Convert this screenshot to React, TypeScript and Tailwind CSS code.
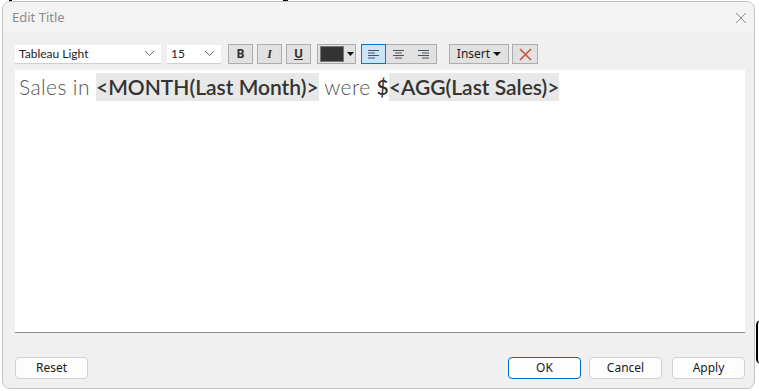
import React from 'react';

const ui = { fontFamily: '"Noto Sans", "Open Sans", sans-serif' };
const tab = { fontFamily: 'Lato, "Noto Sans", sans-serif' };

function Chevron() {
  return (
    <svg width="11" height="7" viewBox="0 0 11 7" className="shrink-0">
      <path d="M1 1 L5.5 5.5 L10 1" fill="none" stroke="#6b6b6b" strokeWidth="1" />
    </svg>
  );
}

function Select({ label, width }: { label: string; width: string }) {
  return (
    <div
      className={`flex items-center justify-between h-[19px] bg-white border-b border-[#d0d0d0] pl-[4px] pr-[6px] ${width}`}
    >
      <span className="text-[12px] text-[#222]" style={tab}>
        {label}
      </span>
      <Chevron />
    </div>
  );
}

function FmtButton({ children }: { children: React.ReactNode }) {
  return (
    <div className="flex items-center justify-center w-[25px] h-[20px] bg-[#e1e1e1] border border-[#adadad]">
      {children}
    </div>
  );
}

function AlignIcon({ kind }: { kind: 'left' | 'center' | 'right' }) {
  const lines =
    kind === 'left'
      ? [
          [0, 11],
          [0, 7],
          [0, 11],
          [0, 7],
        ]
      : kind === 'center'
        ? [
            [0, 11],
            [2, 9],
            [0, 11],
            [2, 9],
          ]
        : [
            [0, 11],
            [4, 11],
            [0, 11],
            [4, 11],
          ];
  return (
    <svg width="11" height="10" viewBox="0 0 11 10">
      {lines.map(([a, b], i) => (
        <line key={i} x1={a} x2={b} y1={1.5 + i * 2.5} y2={1.5 + i * 2.5} stroke="#4a5060" strokeWidth="1" />
      ))}
    </svg>
  );
}

function DlgButton({ label, primary }: { label: string; primary?: boolean }) {
  return (
    <div
      className={`flex items-center justify-center w-[73px] h-[22px] rounded-[4px] bg-[#fdfdfd] border text-[12px] text-[#1a1a1a] ${
        primary ? 'border-[#0067c0]' : 'border-[#d0d0d0]'
      }`}
      style={ui}
    >
      {label}
    </div>
  );
}

export default function App() {
  return (
    <div className="relative w-[759px] h-[391px] bg-white overflow-hidden">
      {/* bits of the window behind */}
      <div className="absolute left-[283px] top-0 w-[5px] h-[3px] bg-black" />
      <div className="absolute left-[9px] top-0 w-[3px] h-[2px] bg-black" />
      <div className="absolute left-[756px] top-[320px] w-[10px] h-[44px] rounded-full border-l-[2px] border-black" />

      <div className="absolute left-[2px] top-[1px] w-[753px] h-[388px] rounded-[8px] border border-[#c4c4c4] bg-[#f0f0f0] overflow-hidden flex flex-col">
        {/* title bar */}
        <div className="flex items-center justify-between h-[31px] shrink-0 bg-[#f3f3f3] pl-[9px] pr-[6px]">
          <span className="text-[13px] text-[#8a8a8a]" style={ui}>
            Edit Title
          </span>
          <svg width="12" height="12" viewBox="0 0 12 12" className="mr-[1px]">
            <path d="M1 1 L11 11 M11 1 L1 11" stroke="#8a8a8a" strokeWidth="1" />
          </svg>
        </div>

        {/* toolbar */}
        <div className="flex items-center h-[20px] mt-[11px] pl-[12px]">
          <Select label="Tableau Light" width="w-[146px]" />
          <div className="w-[6px]" />
          <Select label="15" width="w-[54px]" />
          <div className="flex gap-[4px] ml-[7px]">
            <FmtButton>
              <span className="text-[12px] font-bold text-[#333]" style={ui}>
                B
              </span>
            </FmtButton>
            <FmtButton>
              <span className="text-[12px] italic font-semibold text-[#333]" style={{ fontFamily: '"Liberation Serif", serif' }}>
                I
              </span>
            </FmtButton>
            <FmtButton>
              <span className="text-[12px] font-bold underline text-[#333]" style={ui}>
                U
              </span>
            </FmtButton>
          </div>
          <div className="flex items-center ml-[6px] w-[39px] h-[20px] bg-[#e1e1e1] border border-[#adadad] pl-[2px]">
            <div className="w-[24px] h-[16px] bg-[#333333] border border-[#7a7a7a]" />
            <svg width="7" height="4" viewBox="0 0 7 4" className="ml-[3px]">
              <path d="M0 0 L7 0 L3.5 4 Z" fill="#111" />
            </svg>
          </div>
          <div className="flex ml-[5px] h-[20px] border border-[#adadad] bg-[#e1e1e1]">
            <div className="flex items-center justify-center w-[25px] h-[20px] -mt-[1px] -ml-[1px] bg-[#cce4f7] border border-[#0078d7]">
              <AlignIcon kind="left" />
            </div>
            <div className="flex items-center justify-center w-[25px]">
              <AlignIcon kind="center" />
            </div>
            <div className="flex items-center justify-center w-[25px]">
              <AlignIcon kind="right" />
            </div>
          </div>
          <div
            className="flex items-center justify-center gap-[3px] ml-[12px] w-[60px] h-[20px] bg-[#e1e1e1] border border-[#adadad] text-[12px] text-[#1a1a1a]"
            style={ui}
          >
            Insert
            <svg width="8" height="4" viewBox="0 0 8 4">
              <path d="M0 0 L8 0 L4 4 Z" fill="#111" />
            </svg>
          </div>
          <div className="flex items-center justify-center ml-[3px] w-[26px] h-[20px] bg-[#e1e1e1] border border-[#adadad]">
            <svg width="13" height="13" viewBox="0 0 13 13">
              <path d="M1 1 L12 12 M12 1 L1 12" stroke="#c8553d" strokeWidth="1.6" />
            </svg>
          </div>
        </div>

        {/* edit area */}
        <div className="mt-[6px] ml-[12px] mr-[9px] h-[263px] bg-white border-b border-[#8c8c8c] pl-[4px] pt-[3px]">
          <div className="flex items-center h-[28px] text-[21px] leading-[28px] whitespace-pre" style={tab}>
            <span className="font-light text-[#555] tracking-[0.4px]">Sales in </span>
            <span className="bg-[#e8e8e8] font-semibold text-[#333]">&lt;MONTH(Last Month)&gt;</span>
            <span className="font-light text-[#555] tracking-[0.4px]"> were </span>
            <span className="font-semibold text-[#333]">$</span>
            <span className="bg-[#e8e8e8] font-semibold text-[#333]">&lt;AGG(Last Sales)&gt;</span>
          </div>
        </div>

        {/* footer */}
        <div className="flex items-center mt-[24px] pl-[12px] pr-[9px]">
          <DlgButton label="Reset" />
          <div className="flex-1" />
          <div className="flex">
            <DlgButton label="OK" primary />
            <div className="w-[8px]" />
            <DlgButton label="Cancel" />
            <div className="w-[10px]" />
            <DlgButton label="Apply" />
          </div>
        </div>
      </div>
    </div>
  );
}
